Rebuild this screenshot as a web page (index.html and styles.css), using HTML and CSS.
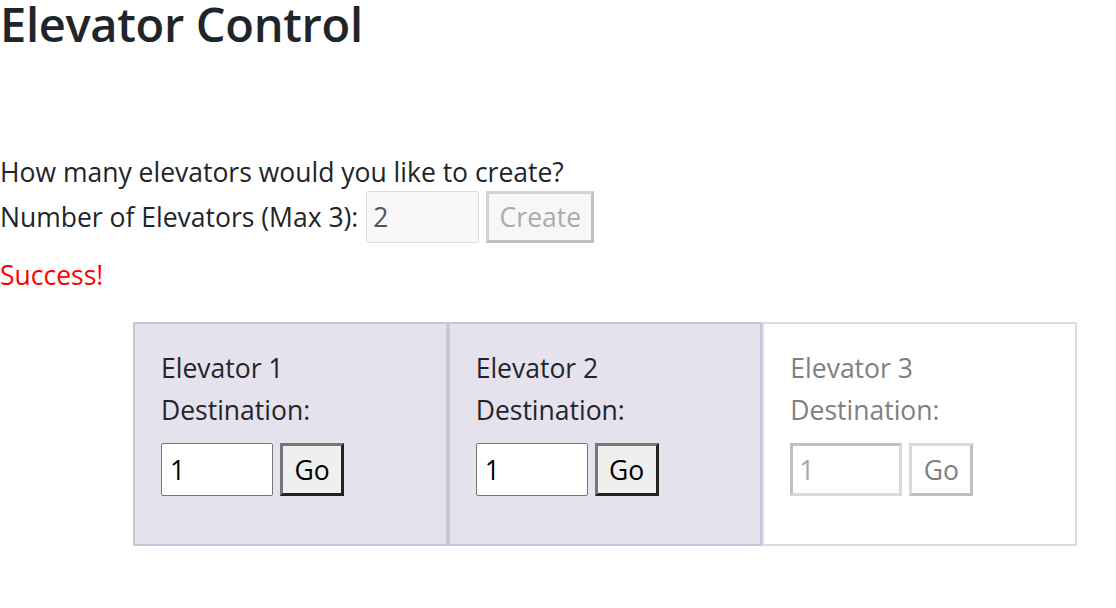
FILE: index.html
```html
<!DOCTYPE html>
<html>
<head>
<meta charset="utf-8">
<link rel="stylesheet" href="styles.css">
</head>
<body>
<h1 class="title">Elevator Control</h1>
<div class="setup">
  <p class="question">How many elevators would you like to create?</p>
  <div class="setup-row">
    <label class="setup-label">Number of Elevators (Max 3):</label>
    <input class="count-input" type="text" value="2" disabled>
    <button class="create-btn" disabled>Create</button>
  </div>
  <p class="status">Success!</p>
</div>
<div class="elevators">
  <div class="elevator active">
    <div class="el-name">Elevator 1</div>
    <div class="el-label">Destination:</div>
    <div class="el-controls">
      <input class="dest-input" type="text" value="1">
      <button class="go-btn">Go</button>
    </div>
  </div>
  <div class="elevator active">
    <div class="el-name">Elevator 2</div>
    <div class="el-label">Destination:</div>
    <div class="el-controls">
      <input class="dest-input" type="text" value="1">
      <button class="go-btn">Go</button>
    </div>
  </div>
  <div class="elevator inactive">
    <div class="el-name">Elevator 3</div>
    <div class="el-label">Destination:</div>
    <div class="el-controls">
      <input class="dest-input" type="text" value="1" disabled>
      <button class="go-btn" disabled>Go</button>
    </div>
  </div>
</div>
</body>
</html>
```

FILE: styles.css
```css
html, body {
  margin: 0;
  padding: 0;
  background: #ffffff;
}
body {
  font-family: "Open Sans", "Noto Sans", sans-serif;
  color: #212529;
  font-size: 26.5px;
}
.title {
  margin: 0;
  font-size: 47px;
  line-height: 48px;
  font-weight: 600;
  letter-spacing: -0.3px;
  color: #212529;
}
.setup {
  margin-top: 106px;
}
.question {
  margin: 0;
  line-height: 36px;
}
.setup-row {
  display: flex;
  align-items: center;
  margin-top: 1px;
  height: 52px;
}
.setup-label {
  line-height: 36px;
  margin-right: 8px;
}
.count-input {
  box-sizing: border-box;
  width: 113px;
  height: 52px;
  background: #f8f8f8;
  border: 1px solid #dcdcdc;
  border-radius: 2px;
  font-family: inherit;
  font-size: 26.5px;
  color: #545454;
  padding: 0 6px;
  margin: 0 7px 0 0;
}
.create-btn {
  box-sizing: border-box;
  width: 108px;
  height: 52px;
  background: #f7f7f7;
  border: 3px solid;
  border-color: #d2d2d2 #c0c0c0 #c0c0c0 #d2d2d2;
  font-family: inherit;
  font-size: 26.5px;
  color: #ababab;
  padding: 0;
  margin: 0;
}
.status {
  margin: 14px 0 0 0;
  line-height: 36px;
  color: #ff0000;
}
.elevators {
  display: flex;
  margin: 29px 0 0 133px;
  width: 944px;
}
.elevator {
  flex: 1;
  box-sizing: border-box;
  border: 2px solid #cac5dc;
  padding: 23px 26px 48px 26px;
}
.elevator.active {
  background: #e5e2ed;
}
.elevator.inactive {
  background: #ffffff;
  border-color: #dcd9e8;
  color: #808080;
}
.el-name, .el-label {
  line-height: 42px;
}
.el-controls {
  display: flex;
  margin-top: 12px;
  height: 53px;
}
.dest-input {
  box-sizing: border-box;
  width: 112px;
  height: 53px;
  background: #ffffff;
  border: 1px solid #767676;
  border-radius: 2px;
  font-family: inherit;
  font-size: 26.5px;
  color: #000;
  padding: 0 8px;
  margin: 0 7px 0 0;
}
.dest-input:disabled {
  border: 3px solid;
  border-color: #c0c0c0 #dadada #dadada #c0c0c0;
  border-radius: 0;
  color: #a8a8a8;
  padding: 0 6px;
}
.go-btn {
  box-sizing: border-box;
  width: 64px;
  height: 53px;
  background: #efefef;
  border: 3px solid;
  border-color: #767676 #222222 #222222 #767676;
  font-family: inherit;
  font-size: 26.5px;
  color: #000;
  padding: 0;
  margin: 0;
}
.go-btn:disabled {
  background: #ffffff;
  border-color: #dadada #c0c0c0 #c0c0c0 #dadada;
  color: #808080;
}
```
